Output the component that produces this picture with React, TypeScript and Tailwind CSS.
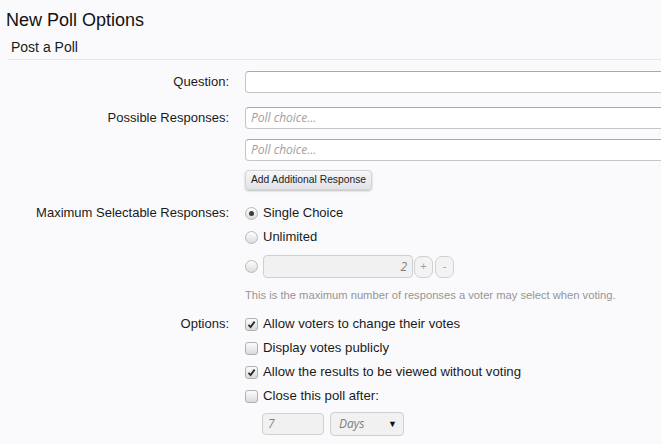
import React from "react";

const font = { fontFamily: '"Liberation Sans", Arial, sans-serif' };

function Radio({ checked }: { checked?: boolean }) {
    return (
        <span className="flex h-[13px] w-[13px] shrink-0 items-center justify-center rounded-full border border-[#b9b9b9] bg-gradient-to-b from-[#fdfdfd] to-[#dcdcdc]">
            {checked && <span className="h-[5px] w-[5px] rounded-full bg-[#3c3c3c]" />}
        </span>
    );
}

function Checkbox({ checked }: { checked?: boolean }) {
    return (
        <span className="flex h-[13px] w-[13px] shrink-0 items-center justify-center rounded-[3px] border border-[#b0b0b0] bg-gradient-to-b from-[#fdfdfd] to-[#dadada]">
            {checked && (
                <svg width="9" height="9" viewBox="0 0 9 9">
                    <path d="M1.5 4.8 L3.6 7 L7.6 1.6" fill="none" stroke="#2a2a2a" strokeWidth="1.8" />
                </svg>
            )}
        </span>
    );
}

function TextBox({ placeholder, className = "" }: { placeholder?: string; className?: string }) {
    return (
        <div
            className={`flex h-[22px] items-center rounded-[4px] border border-[#c6c6c6] border-t-[#a9a9a9] bg-white px-[5px] text-[12px] italic text-[#a0a0a0] ${className}`}
            style={{ fontFamily: '"Open Sans", sans-serif' }}
        >
            {placeholder}
        </div>
    );
}

export default function App() {
    return (
        <div className="h-[444px] w-[661px] overflow-hidden bg-[#fafafc] text-[#1a1a1a]" style={font}>
            <h1 className="pl-[6px] pt-[9px] text-[18px] leading-[22px] text-[#111]">New Poll Options</h1>

            <div className="ml-[8px] mt-[8px] border-b border-[#dfe6ef] pb-[3px] pl-[3px] text-[14px] leading-[17px]">
                Post a Poll
            </div>

            <div className="grid grid-cols-[229px_1fr] gap-x-[16px] text-[13px]">
                {/* question */}
                <div className="mt-[11px] text-right leading-[22px]">Question:</div>
                <div className="mt-[11px]">
                    <TextBox className="w-[480px]" />
                </div>

                {/* responses */}
                <div className="mt-[14px] text-right leading-[22px]">Possible Responses:</div>
                <div className="mt-[14px] flex flex-col items-start">
                    <TextBox placeholder="Poll choice..." className="w-[480px]" />
                    <TextBox placeholder="Poll choice..." className="mt-[10px] w-[480px]" />
                    <button className="mt-[9px] h-[20px] rounded-[4px] border border-[#d3d3d8] bg-gradient-to-b from-[#f7f7f9] to-[#e2e2e7] px-[5px] text-[10.3px] text-[#1c1c1c] shadow-[0_1px_2px_rgba(0,0,0,0.25)]">
                        Add Additional Response
                    </button>
                </div>

                {/* max selectable */}
                <div className="mt-[11px] text-right leading-[24px]">Maximum Selectable Responses:</div>
                <div className="mt-[11px] flex flex-col">
                    <div className="flex h-[24px] items-center gap-[5px]">
                        <Radio checked />
                        <span>Single Choice</span>
                    </div>
                    <div className="flex h-[24px] items-center gap-[5px]">
                        <Radio />
                        <span>Unlimited</span>
                    </div>
                    <div className="mt-[6px] flex items-center gap-[5px]">
                        <Radio />
                        <div className="flex h-[23px] w-[150px] items-center justify-end rounded-[4px] border border-[#cfcfcf] bg-[#f1f1f1] px-[5px] text-[12px] italic text-[#808080]" style={{ fontFamily: '"Open Sans", sans-serif' }}>
                            2
                        </div>
                        <div className="-ml-[4px] flex gap-[2px]">
                            <span className="flex h-[22px] w-[19px] items-center justify-center rounded-[7px] border border-[#d0d0d0] bg-[#f3f3f3] text-[11px] text-[#a0a0a0]">+</span>
                            <span className="flex h-[22px] w-[19px] items-center justify-center rounded-[7px] border border-[#d0d0d0] bg-[#f3f3f3] text-[11px] text-[#a0a0a0]">-</span>
                        </div>
                    </div>
                    <div className="mt-[10px] text-[11.2px] leading-[14px] text-[#959595]">
                        This is the maximum number of responses a voter may select when voting.
                    </div>
                </div>

                {/* options */}
                <div className="mt-[10px] text-right leading-[24px]">Options:</div>
                <div className="mt-[10px] flex flex-col text-[13.2px]">
                    {[
                        ["Allow voters to change their votes", true],
                        ["Display votes publicly", false],
                        ["Allow the results to be viewed without voting", true],
                        ["Close this poll after:", false],
                    ].map(([label, on]) => (
                        <div key={label as string} className="flex h-[24px] items-center gap-[5px]">
                            <Checkbox checked={on as boolean} />
                            <span>{label as string}</span>
                        </div>
                    ))}
                    <div className="mt-[4px] flex items-center gap-[6px] pl-[17px]">
                        <div className="flex h-[22px] w-[62px] items-center rounded-[4px] border border-[#cfcfcf] bg-[#f1f1f1] px-[5px] text-[12px] italic text-[#808080]" style={{ fontFamily: '"Open Sans", sans-serif' }}>
                            7
                        </div>
                        <div className="flex h-[24px] w-[74px] items-center justify-between rounded-[4px] border border-[#cfcfcf] bg-[#f1f1f1] pl-[8px] pr-[6px] text-[12px] italic text-[#808080]" style={{ fontFamily: '"Open Sans", sans-serif' }}>
                            <span>Days</span>
                            <span className="not-italic text-[9px] text-[#111]">▼</span>
                        </div>
                    </div>
                </div>
            </div>
        </div>
    );
}
